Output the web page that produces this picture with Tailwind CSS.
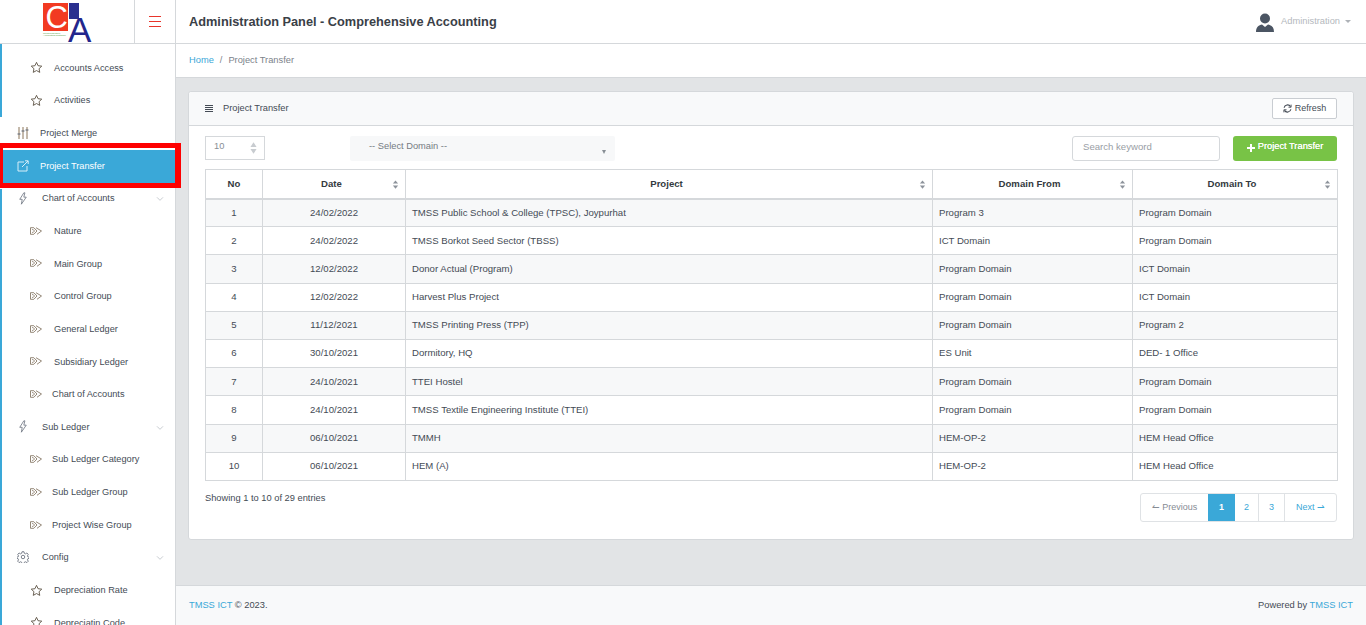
<!doctype html>
<html lang="en">
<head>
<meta charset="utf-8">
<title>Project Transfer</title>
<script src="https://cdn.jsdelivr.net/npm/@tailwindcss/browser@4"></script>
</head>
<body class="relative h-[625px] w-[1366px] overflow-hidden bg-[#e2e4e6] font-['Liberation_Sans',sans-serif] text-[9.300px] text-[#444b55]">
<svg class="hidden"><defs>
<symbol id="star" viewBox="0 0 24 24"><path d="M12 2.500l2.900 6.200 6.800.8-5 4.700 1.300 6.800-6-3.400-6 3.400 1.300-6.800-5-4.700 6.800-.8z" fill="none" stroke="#5f5547" stroke-width="1.700" stroke-linejoin="round"/></symbol>
<symbol id="dbl" viewBox="0 0 12 8"><path d="M.5.7h3.300L7 4 3.800 7.300H.5zM2.200 2.600h1L4.500 4 3.200 5.400h-1M6 .7l5.500 3.300L7 7.300" fill="none" stroke="#7a6a55" stroke-width=".8" stroke-linejoin="round"/></symbol>
<symbol id="bolt" viewBox="0 0 16 24"><path d="M9.500 1.500L2 13.500h4.500L5 22.500l9-13H9.500l2-8z" fill="none" stroke="#6d7480" stroke-width="1.500" stroke-linejoin="round"/></symbol>
<symbol id="chev" viewBox="0 0 12 8"><path d="M1.500 1.500L6 6l4.500-4.500" fill="none" stroke="#aab0b8" stroke-width="1"/></symbol>
<symbol id="sort" viewBox="0 0 8 12"><path d="M4 .5l3.500 4.300H.500zM4 11.500L.500 7.200h7z" fill="#8d939b"/></symbol>
</defs></svg>

<header class="flex h-[44px] border-b border-[#d5d8db] bg-white">
  <div class="flex w-[135px] shrink-0 justify-center border-r border-[#d5d8db]">
    <div class="relative h-[43px] w-[50px]" aria-label="CA logo">
      <div class="absolute left-[0.500px] top-[3px] h-[28px] w-[25px] bg-[#f23a22]"></div>
      <div class="absolute left-[27px] top-[3px] h-[16px] w-[9.500px] bg-[#2a2f8f]"></div>
      <div class="absolute left-[3.500px] top-[3.500px] text-[31px] leading-[28px] text-white">C</div>
      <div class="absolute left-[26px] top-[10px] text-[35px] leading-[40px] text-[#23268c]">A</div>
      <div class="absolute left-[1px] top-[32.500px] text-[2.500px] leading-[2.500px] text-[#4f9a3a]">Comprehensive<br>Accounting Software</div>
    </div>
  </div>
  <div class="flex w-[41px] shrink-0 items-center justify-center border-r border-[#d5d8db]">
    <div class="flex h-[11px] w-[12px] flex-col justify-between"><i class="h-px bg-[#e8352b]"></i><i class="h-px bg-[#e8352b]"></i><i class="h-px bg-[#e8352b]"></i></div>
  </div>
  <h1 class="flex flex-1 items-center pl-[13px] pt-[1px] text-[12.750px] font-bold text-[#3a4047]">Administration Panel - Comprehensive Accounting</h1>
  <div class="flex items-center pr-[15px] text-[#b4b8bd]">
    <svg class="mr-[6px] h-[20px] w-[20px]" viewBox="0 0 20 20"><circle cx="10" cy="6.500" r="5" fill="#4b5563"/><path d="M1 20c0-5 3-7 6-7.500l3 2.500 3-2.500c3 .5 6 2.500 6 7.500z" fill="#4b5563"/></svg>
    <span class="text-[9.300px]">Administration</span>
    <i class="ml-[5px] h-0 w-0 border-x-[3px] border-t-[3px] border-x-transparent border-t-[#aeb2b7]"></i>
  </div>
</header>

<div class="flex h-[581px]">
  <nav class="w-[176px] shrink-0 overflow-hidden border-r border-[#d5d8db] bg-white pt-[8.200px] text-[9.200px]">
    <div class="relative">
      <div class="absolute left-0 top-[-9px] h-[74px] w-[2px] bg-[#3aa8d8]"></div>
      <div class="absolute left-0 top-[137px] h-[450px] w-[2px] bg-[#3aa8d8]"></div>

      <a class="flex h-[32.670px] items-center pl-[30px]"><svg class="mb-[2px] h-[13px] w-[13px]"><use href="#star"/></svg><span class="ml-[11px]">Accounts Access</span></a>
      <a class="flex h-[32.670px] items-center pl-[30px]"><svg class="mb-[2px] h-[13px] w-[13px]"><use href="#star"/></svg><span class="ml-[11px]">Activities</span></a>
      <a class="flex h-[32.670px] items-center pl-[17px]">
        <svg class="mb-[2px] h-[12px] w-[12px]" viewBox="0 0 12 12" fill="none" stroke="#8a7458" stroke-width="1"><path d="M2 0v12M6 0v12M10 0v12"/><path d="M.5 7h3M4.500 4h3M8.500 3h3" stroke="#5a6370"/></svg><span class="ml-[11px]">Project Merge</span></a>
      <a class="mb-[-1px] flex h-[33.670px] items-center bg-[#3aa8d8] pl-[17px] text-white">
        <svg class="mb-[2px] h-[12px] w-[12px]" viewBox="0 0 12 12" fill="none" stroke="#d7eef8" stroke-width="1"><path d="M7 2H1v9h9V6M5 7l6-6M8 .8h3.200V4"/></svg><span class="ml-[11px]">Project Transfer</span></a>
      <a class="flex h-[32.670px] items-center pl-[18px] pr-[11px]"><svg class="mb-[2px] h-[13px] w-[10px]"><use href="#bolt"/></svg><span class="ml-[14px] flex-1">Chart of Accounts</span><svg class="h-[6px] w-[8px]"><use href="#chev"/></svg></a>
      <a class="flex h-[32.670px] items-center pl-[30px]"><svg class="mb-[2px] h-[8px] w-[12px]"><use href="#dbl"/></svg><span class="ml-[12px]">Nature</span></a>
      <a class="flex h-[32.670px] items-center pl-[30px]"><svg class="mb-[2px] h-[8px] w-[12px]"><use href="#dbl"/></svg><span class="ml-[12px]">Main Group</span></a>
      <a class="flex h-[32.670px] items-center pl-[30px]"><svg class="mb-[2px] h-[8px] w-[12px]"><use href="#dbl"/></svg><span class="ml-[12px]">Control Group</span></a>
      <a class="flex h-[32.670px] items-center pl-[30px]"><svg class="mb-[2px] h-[8px] w-[12px]"><use href="#dbl"/></svg><span class="ml-[12px]">General Ledger</span></a>
      <a class="flex h-[32.670px] items-center pl-[30px]"><svg class="mb-[2px] h-[8px] w-[12px]"><use href="#dbl"/></svg><span class="ml-[12px]">Subsidiary Ledger</span></a>
      <a class="flex h-[32.670px] items-center pl-[30px]"><svg class="mb-[2px] h-[8px] w-[12px]"><use href="#dbl"/></svg><span class="ml-[10px]">Chart of Accounts</span></a>
      <a class="flex h-[32.670px] items-center pl-[18px] pr-[11px]"><svg class="mb-[2px] h-[13px] w-[10px]"><use href="#bolt"/></svg><span class="ml-[14px] flex-1">Sub Ledger</span><svg class="h-[6px] w-[8px]"><use href="#chev"/></svg></a>
      <a class="flex h-[32.670px] items-center pl-[30px]"><svg class="mb-[2px] h-[8px] w-[12px]"><use href="#dbl"/></svg><span class="ml-[10px]">Sub Ledger Category</span></a>
      <a class="flex h-[32.670px] items-center pl-[30px]"><svg class="mb-[2px] h-[8px] w-[12px]"><use href="#dbl"/></svg><span class="ml-[10px]">Sub Ledger Group</span></a>
      <a class="flex h-[32.670px] items-center pl-[30px]"><svg class="mb-[2px] h-[8px] w-[12px]"><use href="#dbl"/></svg><span class="ml-[10px]">Project Wise Group</span></a>
      <a class="flex h-[32.670px] items-center pl-[17px] pr-[11px]">
        <svg class="mb-[2px] h-[12px] w-[12px]" viewBox="0 0 24 24" fill="none" stroke="#6d7480" stroke-width="1.800"><circle cx="12" cy="12" r="3.500"/><path d="M10 1.500h4l.7 3.200 2.300 1 2.800-1.700 2.800 2.800-1.700 2.800 1 2.300 3.200.7v2l-3.200.7-1 2.300 1.700 2.800-2.800 2.800-2.800-1.700-2.300 1-.7 3.200h-4l-.7-3.200-2.300-1-2.800 1.700-2.800-2.800 1.700-2.800-1-2.300-3.200-.7v-2l3.200-.7 1-2.300-1.700-2.800 2.800-2.800 2.800 1.700 2.300-1z"/></svg><span class="ml-[13px] flex-1">Config</span><svg class="h-[6px] w-[8px]"><use href="#chev"/></svg></a>
      <a class="flex h-[32.670px] items-center pl-[30px]"><svg class="mb-[2px] h-[13px] w-[13px]"><use href="#star"/></svg><span class="ml-[11px]">Depreciation Rate</span></a>
      <a class="flex h-[32.670px] items-center pl-[30px]"><svg class="mb-[2px] h-[13px] w-[13px]"><use href="#star"/></svg><span class="ml-[11px]">Depreciatin Code</span></a>
    </div>
  </nav>

  <div class="flex min-w-0 flex-1 flex-col">
    <div class="flex h-[34px] shrink-0 items-center border-b border-[#d5d8db] bg-white pl-[13px] text-[#7b828a]">
      <a class="text-[#3aa8d8]">Home</a><span class="mx-[6px]">/</span><span>Project Transfer</span>
    </div>

    <main class="flex-1 px-[12px] pt-[13px]">
      <section class="h-[449px] rounded-[3px] border border-[#d5d8db] bg-white">
        <div class="flex h-[34px] items-center justify-between rounded-t-[3px] border-b border-[#d5d8db] bg-[#f8f9fa] pl-[16px] pr-[16px]">
          <div class="flex items-center">
            <div class="flex h-[7px] w-[8px] flex-col justify-between"><i class="h-px bg-[#444b55]"></i><i class="h-px bg-[#444b55]"></i><i class="h-px bg-[#444b55]"></i><i class="h-px bg-[#444b55]"></i></div>
            <span class="ml-[10px]">Project Transfer</span>
          </div>
          <button class="flex h-[21px] w-[65px] items-center justify-center rounded-[2px] border border-[#c9cdd2] bg-white text-[9px] text-[#444b55]">
            <svg class="mr-[3px] h-[9px] w-[9px]" viewBox="0 0 12 12" fill="none" stroke="#444b55" stroke-width="1.500"><path d="M1.500 5A4.600 4.600 0 0 1 10 3.500M10.500 7A4.600 4.600 0 0 1 2 8.500"/><path d="M10.800.8v3.500H7.300M1.200 11.200V7.700h3.500" stroke-width="1.200"/></svg>Refresh
          </button>
        </div>

        <div class="px-[16px]">
          <div class="flex h-[43px] items-center pt-[1px]">
            <div class="flex h-[24px] w-[60px] items-center justify-between border border-[#d5d8db] pl-[8px] pr-[7px] text-[#888e95]">
              <span class="mb-[3px]">10</span>
              <svg class="h-[14px] w-[7px]" viewBox="0 0 8 14"><path d="M4 .5l3.500 5.300H.500zM4 13.500L.500 8.200h7z" fill="#c8ccd0"/></svg>
            </div>
            <div class="relative ml-[85px] flex h-[25px] w-[265px] items-center rounded-[2px] bg-[#f7f8f9] pb-[3px] pl-[19px] text-[#757b83]">
              -- Select Domain --
              <i class="absolute right-[9px] top-[14px] h-0 w-0 border-x-[2.500px] border-t-[4px] border-x-transparent border-t-[#888e95]"></i>
            </div>
            <div class="ml-auto flex h-[25px] w-[148px] items-center rounded-[3px] border border-[#d5d8db] pb-[2px] pl-[10px] text-[9.600px] text-[#999ea5]">Search keyword</div>
            <button class="ml-[13px] flex h-[25px] w-[104px] items-center justify-center rounded-[3px] bg-[#78c346] pb-[2px] text-[9.300px] text-white [text-shadow:0_0_0.5px_white]">
              <svg class="mr-[3px] mt-[1px] h-[8px] w-[8px]" viewBox="0 0 8 8"><path d="M3 0h2v3h3v2H5v3H3V5H0V3h3z" fill="#fff"/></svg>Project Transfer
            </button>
          </div>

          <table class="w-[1132px] table-fixed border-collapse border border-[#d5d8db] text-[9.600px]">
            <colgroup><col class="w-[57px]"><col class="w-[143px]"><col class="w-[527px]"><col class="w-[200px]"><col class="w-[205px]"></colgroup>
            <thead>
              <tr class="h-[29px] border-b-[2px] border-[#d5d8db] font-bold text-[#343a40]">
                <th class="border border-[#d5d8db]">No</th>
                <th class="relative border border-[#d5d8db] pr-[5px]">Date<svg class="absolute right-[6px] top-[10px] h-[9px] w-[7px]"><use href="#sort"/></svg></th>
                <th class="relative border border-[#d5d8db] pr-[5px]">Project<svg class="absolute right-[6px] top-[10px] h-[9px] w-[7px]"><use href="#sort"/></svg></th>
                <th class="relative border border-[#d5d8db] pr-[6px]">Domain From<svg class="absolute right-[6px] top-[10px] h-[9px] w-[7px]"><use href="#sort"/></svg></th>
                <th class="relative border border-[#d5d8db] pr-[6px]">Domain To<svg class="absolute right-[6px] top-[10px] h-[9px] w-[7px]"><use href="#sort"/></svg></th>
              </tr>
            </thead>
            <tbody>
              <tr class="h-[28.200px] bg-[#f7f8f9]"><td class="border border-[#d5d8db] text-center">1</td><td class="border border-[#d5d8db] text-center">24/02/2022</td><td class="border border-[#d5d8db] pl-[6px]">TMSS Public School &amp; College (TPSC), Joypurhat</td><td class="border border-[#d5d8db] pl-[6px]">Program 3</td><td class="border border-[#d5d8db] pl-[6px]">Program Domain</td></tr>
              <tr class="h-[28.200px]"><td class="border border-[#d5d8db] text-center">2</td><td class="border border-[#d5d8db] text-center">24/02/2022</td><td class="border border-[#d5d8db] pl-[6px]">TMSS Borkot Seed Sector (TBSS)</td><td class="border border-[#d5d8db] pl-[6px]">ICT Domain</td><td class="border border-[#d5d8db] pl-[6px]">Program Domain</td></tr>
              <tr class="h-[28.200px] bg-[#f7f8f9]"><td class="border border-[#d5d8db] text-center">3</td><td class="border border-[#d5d8db] text-center">12/02/2022</td><td class="border border-[#d5d8db] pl-[6px]">Donor Actual (Program)</td><td class="border border-[#d5d8db] pl-[6px]">Program Domain</td><td class="border border-[#d5d8db] pl-[6px]">ICT Domain</td></tr>
              <tr class="h-[28.200px]"><td class="border border-[#d5d8db] text-center">4</td><td class="border border-[#d5d8db] text-center">12/02/2022</td><td class="border border-[#d5d8db] pl-[6px]">Harvest Plus Project</td><td class="border border-[#d5d8db] pl-[6px]">Program Domain</td><td class="border border-[#d5d8db] pl-[6px]">ICT Domain</td></tr>
              <tr class="h-[28.200px] bg-[#f7f8f9]"><td class="border border-[#d5d8db] text-center">5</td><td class="border border-[#d5d8db] text-center">11/12/2021</td><td class="border border-[#d5d8db] pl-[6px]">TMSS Printing Press (TPP)</td><td class="border border-[#d5d8db] pl-[6px]">Program Domain</td><td class="border border-[#d5d8db] pl-[6px]">Program 2</td></tr>
              <tr class="h-[28.200px]"><td class="border border-[#d5d8db] text-center">6</td><td class="border border-[#d5d8db] text-center">30/10/2021</td><td class="border border-[#d5d8db] pl-[6px]">Dormitory, HQ</td><td class="border border-[#d5d8db] pl-[6px]">ES Unit</td><td class="border border-[#d5d8db] pl-[6px]">DED- 1 Office</td></tr>
              <tr class="h-[28.200px] bg-[#f7f8f9]"><td class="border border-[#d5d8db] text-center">7</td><td class="border border-[#d5d8db] text-center">24/10/2021</td><td class="border border-[#d5d8db] pl-[6px]">TTEI Hostel</td><td class="border border-[#d5d8db] pl-[6px]">Program Domain</td><td class="border border-[#d5d8db] pl-[6px]">Program Domain</td></tr>
              <tr class="h-[28.200px]"><td class="border border-[#d5d8db] text-center">8</td><td class="border border-[#d5d8db] text-center">24/10/2021</td><td class="border border-[#d5d8db] pl-[6px]">TMSS Textile Engineering Institute (TTEI)</td><td class="border border-[#d5d8db] pl-[6px]">Program Domain</td><td class="border border-[#d5d8db] pl-[6px]">Program Domain</td></tr>
              <tr class="h-[28.200px] bg-[#f7f8f9]"><td class="border border-[#d5d8db] text-center">9</td><td class="border border-[#d5d8db] text-center">06/10/2021</td><td class="border border-[#d5d8db] pl-[6px]">TMMH</td><td class="border border-[#d5d8db] pl-[6px]">HEM-OP-2</td><td class="border border-[#d5d8db] pl-[6px]">HEM Head Office</td></tr>
              <tr class="h-[28.200px]"><td class="border border-[#d5d8db] text-center">10</td><td class="border border-[#d5d8db] text-center">06/10/2021</td><td class="border border-[#d5d8db] pl-[6px]">HEM (A)</td><td class="border border-[#d5d8db] pl-[6px]">HEM-OP-2</td><td class="border border-[#d5d8db] pl-[6px]">HEM Head Office</td></tr>
            </tbody>
          </table>

          <div class="mt-[12px] flex items-start justify-between">
            <span class="mt-[-1px]">Showing 1 to 10 of 29 entries</span>
            <div class="flex h-[29px] overflow-hidden rounded-[3px] border border-[#dfe2e5] text-[9px] text-[#3aa8d8]">
              <span class="flex w-[67px] items-center justify-center text-[#868c94]">&#8636;&nbsp;Previous</span>
              <span class="flex w-[27px] items-center justify-center bg-[#3aa8d8] font-bold text-white">1</span>
              <span class="flex w-[24px] items-center justify-center border-r border-[#dfe2e5]">2</span>
              <span class="flex w-[26px] items-center justify-center border-r border-[#dfe2e5]">3</span>
              <span class="flex w-[51px] items-center justify-center">Next&nbsp;&#8640;</span>
            </div>
          </div>
        </div>
      </section>
    </main>

    <footer class="flex h-[40px] shrink-0 items-center justify-between border-t border-[#d5d8db] bg-[#f8f9fa] px-[13px]">
      <span><a class="text-[#3aa8d8]">TMSS ICT</a> © 2023.</span>
      <span>Powered by <a class="text-[#3aa8d8]">TMSS ICT</a></span>
    </footer>
  </div>
</div>

<div class="pointer-events-none absolute left-0 top-[143px] h-[45px] w-[181px] border-b-[5px] border-l-[3px] border-r-[6px] border-t-[5px] border-[#fe0000]"></div>
</body>
</html>
